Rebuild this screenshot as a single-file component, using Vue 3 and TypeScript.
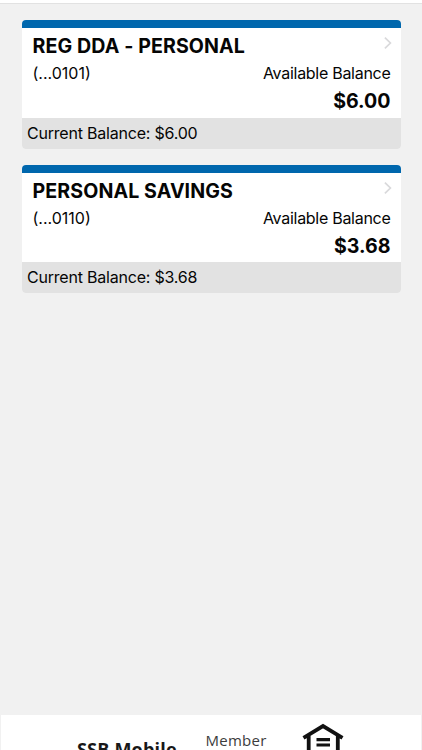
<script setup lang="ts">
interface Account {
  name: string
  mask: string
  available: string
  current: string
}

const accounts: Account[] = [
  { name: 'REG DDA - PERSONAL', mask: '(...0101)', available: '$6.00', current: '$6.00' },
  { name: 'PERSONAL SAVINGS', mask: '(...0110)', available: '$3.68', current: '$3.68' },
]
</script>

<template>
  <div class="screen">
    <header class="topbar"></header>
    <main class="accounts">
      <article v-for="account in accounts" :key="account.mask" class="card">
        <div class="card-body">
          <div class="row title-row">
            <h2 class="name">{{ account.name }}</h2>
            <svg class="chevron" width="10" height="14" viewBox="0 0 10 14" fill="none">
              <path d="M1.9 1.6L7.4 7L1.9 12.4" stroke="#d9d9db" stroke-width="1.7" />
            </svg>
          </div>
          <div class="row detail">
            <span>{{ account.mask }}</span>
            <span class="label">Available Balance</span>
          </div>
          <div class="amount">{{ account.available }}</div>
        </div>
        <div class="card-foot">Current Balance: {{ account.current }}</div>
      </article>
    </main>
    <footer class="footer">
      <span class="brand">SSB Mobile</span>
      <span class="member">Member</span>
      <svg class="lender" width="42" height="30" viewBox="0 0 42 30" fill="none">
        <path d="M1.5 14.8L21 3L40.5 14.8M6.7 13V30M35.8 13V30" stroke="#111" stroke-width="3.8" />
        <path d="M14.5 16.6H28M14.5 22H28" stroke="#111" stroke-width="3.2" />
      </svg>
    </footer>
  </div>
</template>

<style>
body {
  margin: 0;
  overflow: hidden;
}
</style>

<style scoped>
.screen {
  display: flex;
  flex-direction: column;
  height: 750px;
  overflow: hidden;
  box-sizing: border-box;
  background: #f1f1f1;
  color: #050505;
  font-family: Inter, "Liberation Sans", sans-serif;
}
.topbar {
  height: 3px;
  flex: none;
  background: #fff;
  border-bottom: 1px solid #e2e2e2;
}
.accounts {
  flex: 1;
  display: flex;
  flex-direction: column;
  gap: 16px;
  padding: 16.3px 21px 0 21.5px;
}
.card {
  height: 128.3px;
  display: flex;
  flex-direction: column;
  overflow: hidden;
  border-radius: 4px;
  background: #fff;
}
.card-body {
  flex: 1;
  box-sizing: border-box;
  border-top: 8.5px solid #0067ad;
  padding: 6px 10.5px 0 11px;
}
.row {
  display: flex;
  justify-content: space-between;
}
.title-row {
  height: 24px;
}
.name {
  margin: 0;
  font-size: 19.6px;
  line-height: 25px;
  font-weight: 700;
  letter-spacing: 0.1px;
}
.chevron {
  margin: 2px -2px 0 0;
}
.detail {
  margin-top: 3px;
  font-size: 16px;
  line-height: 24px;
}
.label {
  letter-spacing: -0.28px;
}
.amount {
  margin-top: 3px;
  text-align: right;
  font-size: 19.6px;
  line-height: 26px;
  font-weight: 700;
}
.card-foot {
  flex: none;
  height: 31px;
  padding-left: 5.5px;
  background: #e2e2e2;
  font-size: 16px;
  line-height: 30px;
  letter-spacing: -0.21px;
}
.footer {
  flex: none;
  display: flex;
  align-items: flex-start;
  height: 35px;
  margin: 0 1px;
  overflow: hidden;
  background: #fff;
  font-family: "Open Sans", "Noto Sans", sans-serif;
}
.brand {
  width: 128.5px;
  padding: 22px 0 0 76px;
  font-size: 18px;
  line-height: 24px;
  font-weight: 700;
  letter-spacing: 0.2px;
  color: #181818;
  white-space: nowrap;
}
.member {
  width: 96px;
  padding-top: 14px;
  font-size: 15px;
  line-height: 22px;
  letter-spacing: 0.25px;
  color: #3c3c3c;
}
.lender {
  flex: none;
  margin-top: 8px;
}
</style>
